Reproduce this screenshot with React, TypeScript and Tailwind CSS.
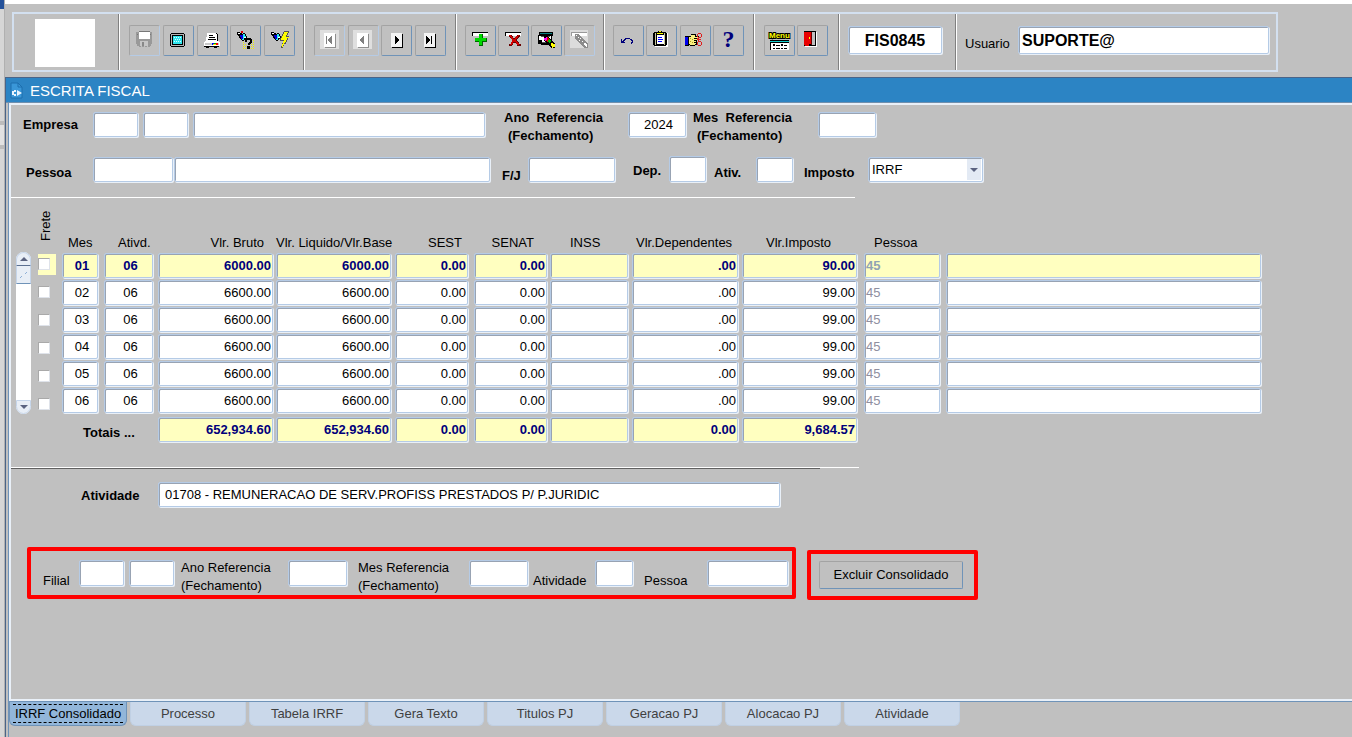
import React from 'react';
import clsx from 'clsx';

const box =
  'block rounded-xs border border-[#b5cbe6] outline-none shadow-[inset_1px_1px_0_#98a3b3,1px_1px_0_#e9f0f8]';
const field = `${box} bg-white px-[3px] text-black`;

const months = [
  { mes: '01', bruto: '6000.00', imposto: '90.00' },
  { mes: '02', bruto: '6600.00', imposto: '99.00' },
  { mes: '03', bruto: '6600.00', imposto: '99.00' },
  { mes: '04', bruto: '6600.00', imposto: '99.00' },
  { mes: '05', bruto: '6600.00', imposto: '99.00' },
  { mes: '06', bruto: '6600.00', imposto: '99.00' },
];

const columns = [
  { title: 'Mes', col: 'w-[42px]', head: 'pl-1.5', input: 'w-9 pl-1 text-center' },
  { title: 'Ativd.', col: 'w-[54px]', head: 'pl-3.5', input: 'w-[49px] pl-1 text-center' },
  { title: 'Vlr. Bruto', col: 'w-[118px]', head: 'pr-3 text-right', input: 'w-[115px] pr-px text-right' },
  { title: 'Vlr. Liquido/Vlr.Base', col: 'w-[119px]', head: '', input: 'w-[115px] pr-px text-right' },
  { title: 'SEST', col: 'w-[79px]', head: 'pr-3 text-right', input: 'w-[73px] pr-px text-right' },
  { title: 'SENAT', col: 'w-[76px]', head: 'pr-4 text-right', input: 'w-[73px] pr-px text-right' },
  { title: 'INSS', col: 'w-[82px]', head: 'pl-5', input: 'w-[78px] pr-px text-right' },
  { title: 'Vlr.Dependentes', col: 'w-[110px]', head: 'pl-1', input: 'w-[106px] pr-px text-right' },
  { title: 'Vlr.Imposto', col: 'w-[122px]', head: 'pl-6', input: 'w-[115px] pr-px text-right' },
  { title: 'Pessoa', col: 'w-[82px]', head: 'pl-2.5', input: 'w-[76px] pl-px' },
  { title: '', col: 'w-[317px]', head: '', input: 'w-[315px]' },
];

const totals = ['652,934.60', '652,934.60', '0.00', '0.00', '', '0.00', '9,684.57'];

const tabs = [
  'IRRF Consolidado',
  'Processo',
  'Tabela IRRF',
  'Gera Texto',
  'Titulos PJ',
  'Geracao PJ',
  'Alocacao PJ',
  'Atividade',
];

const Icon = ({ children }: { children: React.ReactNode }) => (
  <svg width="20" height="20" viewBox="0 0 20 20" className="shrink-0" shapeRendering="crispEdges" aria-hidden="true">
    {children}
  </svg>
);

const NavIcon = ({ d, disabled }: { d: string; disabled?: boolean }) => (
  <Icon>
    {disabled && <path d="M0 1h19v19H0z" fill="#dfdfdf" />}
    <path d="M5 5h11v14H5z" fill={disabled ? '#8f8f8f' : '#000'} />
    <path d="M4 4h11v14H4z" fill={disabled ? '#fff' : '#f4f4f4'} />
    <path d={d} fill={disabled ? '#808080' : '#000'} />
  </Icon>
);

const SaveIcon = () => (
  <Icon>
    <path d="M1 3h16v12h-1v2h-1v1h-2v-1h-1v1h-2v-1H9v1H7v-1H6v1H4v-1H2v-2H1z" fill="#999" />
    <path d="M4 2h11v8H4z" fill="#fff" />
    <path d="M4 2h11v1H4zM2 5h1v1H2zM15 5h1v1h-1z" fill="#777" />
    <path d="M5 12h8v5H5z" fill="#c6c6c6" />
    <path d="M7 13h2v4H7z" fill="#888" />
  </Icon>
);

const ScreenIcon = () => (
  <Icon>
    <path d="M3 4h13v1h1v12h-1v1H3v-1H2V5h1z" fill="#000" />
    <path d="M3 5h13v12H3z" fill="#b5b5b5" />
    <path d="M4 6h11v10H4z" fill="#000" />
    <path d="M5 7h9v8H5z" fill="#2fe6ee" />
    <path d="M6 8h1v1H6zM8 8h1v1H8zM10 8h1v1h-1zM12 8h1v1h-1zM7 10h1v1H7zM9 10h1v1H9zM11 10h1v1h-1zM6 12h1v1H6zM8 12h1v1H8zM10 12h1v1h-1zM12 12h1v1h-1z" fill="#d6ffff" />
  </Icon>
);

const PrintIcon = () => (
  <Icon>
    <path d="M6 4h9v1h1v7H6z" fill="#000" />
    <path d="M5 4h9v1h1v7H4V8h1z" fill="#fff" />
    <path d="M7 6h4v1H7zM7 8h6v1H7zM6 10h8v1H6z" fill="#000" />
    <path d="M3 12h14v1h1v4h-1v1h-2v1h-3v-1H7v1H4v-1H2v-5h1z" fill="#000" />
    <path d="M3 12h14v1h1v4H2v-4h1z" fill="#fff" />
    <path d="M3 14h14v2H3z" fill="#c8c8c8" />
    <path d="M10 14h2v2h-2z" fill="#00f" />
    <path d="M12 14h2v2h-2z" fill="#0a0" />
    <path d="M14 14h2v2h-2z" fill="#f00" />
    <path d="M11 15h3v1h-3z" fill="#ee0" />
  </Icon>
);

const Torch = () => (
  <>
    <path d="M1 3h3v1h2v1h1V4h2v1h1v2h1v2h-1v1H9v1H8v1H6v-1H5v-1H4V9H3V7H2V6H1z" fill="#000" />
    <path d="M4 6h3v4H5V8H4z" fill="#00d" />
    <path d="M7 5h2v2h1v2H8v2H6v-1h1z" fill="#2fe6ee" />
    <path d="M2 4h2v1H2zM8 8h2v1H8z" fill="#fff" />
  </>
);

const QueryEnterIcon = () => (
  <Icon>
    <path d="M5 2h2v2H5z" fill="#d00" />
    <Torch />
    <path
      d="M9 11h1v1H9zM7 13h1v1H7zM7 15h1v1H7zM7 17h1v1H7zM7 19h1v1H7zM9 19h1v1H9zM15 11h1v1h-1zM17 11h1v1h-1zM17 13h1v1h-1zM15 15h1v1h-1zM17 15h1v1h-1zM15 17h1v1h-1zM17 17h1v1h-1zM17 19h1v1h-1zM15 19h1v1h-1zM9 15h1v1H9zM9 17h1v1H9zM13 15h1v1h-1z"
      fill="#ee0"
    />
    <path d="M10 9h5v1h1v4h-1v1h-1v1h-2v-2h1v-1h1v-2h-3v2H9v-3h1zM11 17h3v3h-3z" fill="#000" />
  </Icon>
);

const QueryRunIcon = () => (
  <Icon>
    <Torch />
    <path d="M14 2h5v2h-1v2h-1v1h2v2h-1v2h-1v2h-1v2h-2v2h-1v2h-2v-2h1v-3h1v-2h-3V9h1V7h1V5h1V3h1z" fill="#555" />
    <path d="M14 3h4v1h-1v2h-1v2h3v1h-2v2h-1v2h-1v1h-1v2h-1v2h-1v-3h1v-3h1v-1h-3V9h1V7h1V5h1z" fill="#ff0" />
  </Icon>
);

const InsertIcon = () => (
  <Icon>
    <path d="M1 3h16v4H1z" fill="#000" />
    <path d="M2 4h15v3H2z" fill="#fff" />
    <path d="M8 5h4v4h4v4h-4v4H8v-4H4V9h4z" fill="#006400" />
    <path d="M8 5h3v4h4v3h-4v4H8v-4H4V9h4z" fill="#00d900" />
  </Icon>
);

const DeleteIcon = () => (
  <Icon>
    <path d="M1 3h16v4H1z" fill="#000" />
    <path d="M2 4h15v3H2z" fill="#fff" />
    <path d="M5 6h3v1h1v2h3V7h1V6h3v2h-1v1h-1v1h-1v2h1v1h1v2h2v2h-4v-2h-1v-1h-3v2H8v1H5v-2h2v-2h1v-3H7V9H6V8H5z" fill="#600" />
    <path d="M5 6h2v1h1v1h1v2h2V8h1V7h2V6h1v1h-1v2h-1v1h-1v2h1v1h1v1h1v2h-2v-1h-1v-2H9v2H8v1H6v-1h1v-2h1v-3H7V8H6V7H5z" fill="#d00000" />
  </Icon>
);

const ClearFormIcon = () => (
  <Icon>
    <path d="M2 3h14v4h-1v9H4v-1H1V6h1z" fill="#000" />
    <path d="M3 4h12v1H3z" fill="#0b8080" />
    <path d="M2 7h12v7H5v-3H2z" fill="#fff" />
    <path d="M4 7h9v1H4zM5 13h4v1H5z" fill="#555" />
    <path d="M7 7h4l7 8v4h-4L7 11z" fill="#000" />
    <path d="M7 9h2V8h1v3H9v1H8v-1H7z" fill="#f0f" />
    <path d="M10 8h1v1h1v2h-1v2h-1v-1H9v-1h1z" fill="#e00000" />
    <path d="M12 10h1v1h1v2h-1v1h-1v-1h-1v-2h1z" fill="#0b0" />
    <path d="M14 14h2v1h2v3h-2v1h-1v-2h-1z" fill="#ff0" />
  </Icon>
);

const BrushIcon = () => (
  <Icon>
    <path d="M0 1h18v18H0z" fill="#dcdcdc" />
    <path d="M1 3h16v4H1z" fill="#fff" />
    <path d="M1 3h16v1H1zM1 3h1v4H1z" fill="#999" />
    <path d="M5 5h4l9 10v4h-4L5 9z" fill="#8c8c8c" />
    <path d="M6 6h1v1H6zM8 8h1v1H8zM10 9h1v1h-1zM9 11h1v1H9zM12 12h1v1h-1zM14 14h2v1h1v3h-1v-1h-1v-1h-1z" fill="#fff" />
  </Icon>
);

const UndoIcon = () => (
  <Icon>
    <path d="M2 10h1v2h1v-1h1v-1h1V9h5v1h2v1h1v3h-1v1h-1v-2h1v-1h-1v-1h-1v-1H7v1H6v1H5v1h1v1H2z" fill="#00007b" />
  </Icon>
);

const ListIcon = () => (
  <Icon>
    <path d="M3 4h13v14H3z" fill="#fff" />
    <path d="M2 3h12v1h1v12h-1v1H2v-1H1V4h1z" fill="#000" />
    <path d="M3 4h10v12H3z" fill="#c7c79b" />
    <path d="M4 6h8v10H4z" fill="#000" />
    <path d="M5 6h7v9H5z" fill="#fff" />
    <path d="M6 2h4v1h2v3H4V3h2z" fill="#000" />
    <path d="M7 2h2v1H7zM5 4h6v1H5z" fill="#ff0" />
    <path d="M6 8h4v1H6zM6 10h5v1H6zM6 12h4v1H6z" fill="#00f" />
  </Icon>
);

const EditIcon = () => (
  <Icon>
    <path d="M0 7h4v10H0z" fill="#000" />
    <path d="M0 8h3v8H0z" fill="#00e" />
    <path d="M4 7h2V5h5v2h3v3h-2v6h-2v1H5v-1H4z" fill="#000" />
    <path d="M4 8h2V6h4v2h3v1H9v1h3v1H9v1h2v1H9v1h2v1h-1v1H5v-1H4z" fill="#f8f080" />
    <path d="M5 9h1v1H5zM7 10h1v1H7zM5 12h1v1H5zM7 13h1v1H7z" fill="#b09b20" />
    <path
      d="M13 4h3v1h1v3h-1v1h-2v1h2v1h-2v1h2v1h1v3h-1v1h-3v-1h-1v-3h1v-2h-1V9h1V8h-1V5h1zm0 1v3h3V5zm0 8v3h3v-3z"
      fill="#e02020"
      fillRule="evenodd"
    />
  </Icon>
);

const HelpIcon = () => (
  <span className="font-['Liberation_Serif',serif] text-2xl leading-5 font-bold text-[#00007b]">?</span>
);

const MenuIcon = () => (
  <svg width="20" height="22" viewBox="0 0 20 22" className="shrink-0 overflow-visible" aria-hidden="true">
    <text x="-1" y="9" fontFamily="Liberation Sans, sans-serif" fontWeight="bold" fontSize="8" fill="#ff0" stroke="#000" strokeWidth="2" paintOrder="stroke">Menu</text>
    <g shapeRendering="crispEdges">
      <path d="M0 11h19v10H0z" fill="#000" />
      <path d="M0 12h19v1H0z" fill="#1cc" />
      <path d="M1 14h18v7H1z" fill="#fff" />
      <path d="M3 15h2v2H3zM6 16h4v1H6zM11 15h2v2h-2zM14 16h3v1h-3zM3 19h2v1H3zM6 19h4v1H6zM11 19h2v1h-2zM14 19h3v1h-3z" fill="#000" />
    </g>
  </svg>
);

const ExitIcon = () => (
  <Icon>
    <path d="M2 3h12v15H2z" fill="#fff" />
    <path d="M1 2h12v15H1z" fill="#000" />
    <path d="M8 3h4v13H8z" fill="#c0c0c0" />
    <path d="M1 3h7v12H6v2H2v-1H1z" fill="#e80000" />
    <path d="M8 3h1v13H8z" fill="#600" />
    <path d="M6 8h1v2H6z" fill="#ff0" />
  </Icon>
);

const toolGroups = [
  {
    width: 'w-[185px]',
    pad: 'pl-[9px] pr-2',
    items: [
      { label: 'Salvar', icon: <SaveIcon />, disabled: true },
      { label: 'Tela', icon: <ScreenIcon /> },
      { label: 'Imprimir', icon: <PrintIcon /> },
      { label: 'Entrar consulta', icon: <QueryEnterIcon /> },
      { label: 'Executar consulta', icon: <QueryRunIcon /> },
    ],
  },
  {
    width: 'w-[152px]',
    pad: 'px-[9px]',
    items: [
      { label: 'Primeiro', icon: <NavIcon disabled d="M6 7h1v8H6zM11 7h1v8h-1v-1h-1v-1H9v-1H8v-2h1V9h1V8h1z" />, disabled: true },
      { label: 'Anterior', icon: <NavIcon disabled d="M10 7h1v8h-1v-1H9v-1H8v-1H7v-2h1V9h1V8h1z" />, disabled: true },
      { label: 'Proximo', icon: <NavIcon d="M8 7h1v1h1v1h1v1h1v2h-1v1h-1v1H9v1H8z" /> },
      { label: 'Ultimo', icon: <NavIcon d="M6 7h1v1h1v1h1v1h1v2H9v1H8v1H7v1H6zM11 7h1v8h-1z" /> },
    ],
  },
  {
    width: 'w-[148px]',
    pad: 'px-2',
    items: [
      { label: 'Inserir', icon: <InsertIcon /> },
      { label: 'Excluir', icon: <DeleteIcon /> },
      { label: 'Limpar tela', icon: <ClearFormIcon /> },
      { label: 'Limpar registro', icon: <BrushIcon />, disabled: true },
    ],
  },
  {
    width: 'w-[150px]',
    pad: 'pl-2 pr-[9px]',
    items: [
      { label: 'Desfazer', icon: <UndoIcon /> },
      { label: 'Lista de valores', icon: <ListIcon /> },
      { label: 'Editar', icon: <EditIcon /> },
      { label: 'Ajuda', icon: <HelpIcon /> },
    ],
  },
  {
    width: 'w-[85px]',
    pad: 'pl-[9px] pr-2.5',
    items: [
      { label: 'Menu', icon: <MenuIcon /> },
      { label: 'Sair', icon: <ExitIcon /> },
    ],
  },
];

const Field = ({ label, className, value }: { label: string; className: string; value?: string }) => (
  <input aria-label={label} defaultValue={value} className={clsx(field, className)} />
);

const Toolbar = () => (
  <header className="ml-[7px] mt-2 flex h-15 w-[1266px] border-2 border-[#d3e0f0]">
    <div className="w-[105px] border-r border-[#808080] pl-[21px] pt-[5px]">
      <div className="h-12 w-15 bg-white"></div>
    </div>
    {toolGroups.map((group, index) => (
      <div
        key={index}
        className={clsx('flex justify-between border-l border-r border-l-white border-r-[#808080] pt-[11px]', group.width, group.pad)}
      >
        {group.items.map((item) => (
          <button
            key={item.label}
            type="button"
            aria-label={item.label}
            disabled={item.disabled}
            className={clsx(
              'flex h-[31px] w-[31px] justify-center rounded-xs border border-t-[#a3a3a3] border-l-[#a3a3a3] pt-[3px]',
              item.disabled ? 'border-r-[#b5cbe6] border-b-[#b5cbe6]' : 'border-r-[#6f93b8] border-b-[#6f93b8]',
            )}
          >
            {item.icon}
          </button>
        ))}
      </div>
    ))}
    <div className="w-[117px] border-l border-r border-l-white border-r-[#808080] pl-2 pt-3">
      <Field label="Programa" value="FIS0845" className="h-7 w-[94px] pt-0.5 text-center text-base font-bold" />
    </div>
    <div className="flex flex-1 border-l border-white pl-2 pr-[7px] pt-3">
      <label htmlFor="usuario" className="w-[53px] pt-2.5">Usuario</label>
      <input id="usuario" defaultValue="SUPORTE@" className={clsx(field, 'h-7 flex-1 pt-0.5 text-base font-bold')} />
    </div>
  </header>
);

const Filters = () => (
  <section className="w-[975px] pl-3 font-bold">
    <div className="flex h-[52px] pt-1">
      <label htmlFor="empresa" className="w-[70px] pt-2">Empresa</label>
      <input id="empresa" className={clsx(field, 'mt-[3px] h-[25px] w-[45px]')} />
      <Field label="Filial da empresa" className="mt-[3px] ml-[5px] h-[25px] w-[45px]" />
      <Field label="Nome da empresa" className="mt-[3px] ml-[5px] h-[25px] w-[292px]" />
      <label htmlFor="ano" className="ml-[19px] w-[124px] leading-[18px]">
        Ano&nbsp; Referencia
        <span className="block pl-1">(Fechamento)</span>
      </label>
      <input id="ano" defaultValue="2024" className={clsx(box, 'mt-[3px] h-[25px] w-[58px] bg-white pl-[15px] font-normal')} />
      <label htmlFor="mes" className="ml-[7px] w-[125px] leading-[18px]">
        Mes&nbsp; Referencia
        <span className="block pl-1">(Fechamento)</span>
      </label>
      <input id="mes" className={clsx(field, 'mt-[3px] h-[25px] w-[58px]')} />
    </div>
    <div className="flex h-10">
      <label htmlFor="pessoa" className="w-[70px] pl-[3px] pt-2">Pessoa</label>
      <input id="pessoa" className={clsx(field, 'h-[25px] w-20')} />
      <Field label="Nome da pessoa" className="ml-px h-[25px] w-[316px]" />
      <label htmlFor="fj" className="ml-3 w-[26px] pt-[11px]">F/J</label>
      <input id="fj" className={clsx(field, 'h-[25px] w-[87px]')} />
      <label htmlFor="dep" className="ml-[18px] w-9 pt-1.5">Dep.</label>
      <input id="dep" className={clsx(field, '-mt-px h-[26px] w-[37px]')} />
      <label htmlFor="ativ" className="ml-2 w-[42px] pt-2">Ativ.</label>
      <input id="ativ" className={clsx(field, 'h-[25px] w-[37px]')} />
      <label htmlFor="imposto" className="ml-[11px] w-16 pt-2">Imposto</label>
      <div className="relative h-[25px] w-[115px]">
        <select id="imposto" className={clsx(field, 'h-full w-full appearance-none font-normal')}>
          <option>IRRF</option>
        </select>
        <span className="pointer-events-none absolute inset-y-0.5 right-0.5 flex w-3.5 items-center justify-center bg-[#e3eaf4]">
          <svg width="8" height="4" viewBox="0 0 8 4" aria-hidden="true">
            <path d="M0 0h8L4 4z" fill="#5b6380" />
          </svg>
        </span>
      </div>
    </div>
  </section>
);

const ScrollBar = () => (
  <div className="mt-[41px] flex h-[162px] w-[15px] flex-col rounded-lg bg-white" aria-hidden="true">
    <div className="flex h-3.5 items-center justify-center rounded-t-lg border border-[#c5d5ea] border-b-[#5b6f90] bg-[#e8eef6]">
      <svg width="8" height="4" viewBox="0 0 8 4">
        <path d="M0 4h8L4 0z" fill="#5b6380" />
      </svg>
    </div>
    <div className="flex h-[18px] items-center justify-center border-x border-b border-x-[#c5d5ea] border-b-[#6f93b8] bg-[#e8eef6]">
      <svg width="8" height="8" viewBox="0 0 8 8" stroke="#8fb0d6">
        <path d="M0 7l2-2M5 3l2-2" />
      </svg>
    </div>
    <div className="flex-1"></div>
    <div className="flex h-3.5 items-center justify-center rounded-b-lg border border-[#c5d5ea] bg-[#e8eef6]">
      <svg width="8" height="4" viewBox="0 0 8 4">
        <path d="M0 0h8L4 4z" fill="#5b6380" />
      </svg>
    </div>
  </div>
);

const cellColor = (row: number, column: number) => {
  const bg = row === 0 ? 'bg-[#ffffc0]' : 'bg-white';
  if (column === 9) return clsx(bg, row === 0 ? 'font-bold text-[#8fa3b3]' : 'text-[#8f8f9f]');
  return clsx(bg, row === 0 ? 'font-bold text-[#00007b]' : 'text-black');
};

const MonthsGrid = () => (
  <section className="flex pl-[5px] pt-[13px]">
    <ScrollBar />
    <div className="ml-[7px] w-6">
      <div className="flex h-[39px] items-start">
        <span className="h-[30px] w-4 rotate-180 leading-4 [writing-mode:vertical-rl]">Frete</span>
      </div>
      {months.map((row, index) => (
        <div key={row.mes} className="flex h-7 items-center">
          <div className={clsx('flex h-[21px] w-[18px] items-center', index === 0 && 'bg-[#ffffc0]')}>
            <input
              type="checkbox"
              aria-label={`Frete ${row.mes}`}
              className="h-3 w-3 appearance-none border border-t-[#a9a9a9] border-r-[#dfe3ea] border-b-[#dfe3ea] border-l-[#a9a9a9] bg-white"
            />
          </div>
        </div>
      ))}
    </div>
    <table className="w-[1201px] table-fixed border-collapse">
      <colgroup>
        {columns.map((column, index) => (
          <col key={index} className={column.col} />
        ))}
      </colgroup>
      <thead>
        <tr className="h-[42px] align-bottom">
          {columns.map((column, index) => (
            <th key={index} scope="col" className={clsx('whitespace-nowrap p-0 text-left font-normal leading-[21px]', column.head)}>
              {column.title}
            </th>
          ))}
        </tr>
      </thead>
      <tbody>
        {months.map((row, rowIndex) => {
          const values = [row.mes, '06', row.bruto, row.bruto, '0.00', '0.00', '', '.00', row.imposto, '45', ''];
          return (
            <tr key={row.mes} className="h-[27px] align-top">
              {values.map((value, index) => (
                <td key={index} className="p-0">
                  <input
                    aria-label={`${columns[index].title || 'Nome'} ${row.mes}`}
                    defaultValue={value}
                    className={clsx(box, 'h-[25px]', columns[index].input, cellColor(rowIndex, index))}
                  />
                </td>
              ))}
            </tr>
          );
        })}
      </tbody>
      <tfoot>
        <tr className="align-top">
          <th colSpan={2} scope="row" className="p-0 pl-[21px] pt-2.5 text-left">Totais ...</th>
          {totals.map((total, index) => (
            <td key={index} className="p-0 pt-0.5">
              <input
                aria-label={`Total ${columns[index + 2].title}`}
                defaultValue={total}
                className={clsx(box, 'h-[25px] bg-[#ffffc0] font-bold text-[#00007b]', columns[index + 2].input)}
              />
            </td>
          ))}
          <td colSpan={2}></td>
        </tr>
      </tfoot>
    </table>
  </section>
);

const Consolidado = () => (
  <section className="flex items-start pl-4">
    <div className="flex h-[52px] w-[769px] rounded-xs border-4 border-[#f00] pl-3 pt-[9px]">
      <label htmlFor="filial" className="w-9 pt-[13px]">Filial</label>
      <input id="filial" className={clsx(field, 'h-[26px] w-[45px]')} />
      <Field label="Nome da filial" className="ml-[5px] h-[26px] w-[45px]" />
      <label htmlFor="ano2" className="-mt-px ml-[7px] w-[107px] leading-[18px]">
        Ano Referencia
        <span className="block">(Fechamento)</span>
      </label>
      <input id="ano2" className={clsx(field, 'h-[26px] w-[59px]')} />
      <label htmlFor="mes2" className="-mt-px ml-[11px] w-[111px] leading-[18px]">
        Mes Referencia
        <span className="block">(Fechamento)</span>
      </label>
      <input id="mes2" className={clsx(field, 'h-[26px] w-[59px]')} />
      <label htmlFor="atividade2" className="ml-[5px] w-[62px] pt-[13px]">Atividade</label>
      <input id="atividade2" className={clsx(field, 'h-[26px] w-[38px]')} />
      <label htmlFor="pessoa2" className="ml-[11px] w-[63px] pt-[13px]">Pessoa</label>
      <input id="pessoa2" className={clsx(field, 'h-[26px] w-[81px]')} />
    </div>
    <div className="ml-[11px] mt-[3px] h-[50px] w-[171px] rounded-xs border-4 border-[#f00] pl-2 pt-[7px]">
      <button
        type="button"
        className="h-7 w-36 rounded-xs border border-t-[#a3a3a3] border-r-[#6f93b8] border-b-[#6f93b8] border-l-[#a3a3a3]"
      >
        Excluir Consolidado
      </button>
    </div>
  </section>
);

const App = () => {
  return (
    <div className="flex min-h-screen overflow-hidden bg-[#c0c0c0] font-['Liberation_Sans',Arial,sans-serif] text-[13px] leading-4 text-black">
      <div className="w-[5px] shrink-0 border-r border-[#b0b0b0] bg-[#d6d6d6]">
        <div className="h-[9px] bg-[#24519a]"></div>
        <div className="mt-28 h-7 border-y-4 border-[#bcbcbc] bg-[#e2e2e2]"></div>
      </div>
      <div className="flex min-w-0 flex-1 flex-col">
        <div className="h-1 bg-white"></div>
        <Toolbar />
        <main className="mt-[5px] flex flex-1 flex-col border-l border-t border-[#4a6488]">
          <h1 className="flex h-[25px] shrink-0 items-center border-b border-[#6f8fae] bg-[#2c84c4] pl-1 pt-px text-[15px] text-white">
            <svg width="13" height="17" viewBox="0 0 13 17" className="mr-[7px]" aria-hidden="true">
              <path d="M1 1h7l4 4v11H1z" fill="#3a97d8" stroke="#1d6fae" />
              <path d="M8 1v4h4" fill="none" stroke="#1d6fae" />
              <path d="M2 9h2v4H2zM4 8h2v2H4zM4 12h2v2H4zM7 8l5 3-5 3z" fill="#e8f4ff" />
            </svg>
            ESCRITA FISCAL
          </h1>
          <div className="ml-0.5 flex flex-1 flex-col border-l border-[#6f93b8]">
            <div className="flex-1 border-y-2 border-l-2 border-[#e9f0f8]">
              <Filters />
              <hr className="w-[844px] border-white" />
              <MonthsGrid />
              <hr className="mt-[25px] w-[848px] border-white" />
              <hr className="w-[809px] border-[#606060]" />
              <div className="flex pl-[70px] pt-[13px]">
                <label htmlFor="atividade" className="w-[77px] pt-1.5 font-bold">Atividade</label>
                <input
                  id="atividade"
                  defaultValue="01708 - REMUNERACAO DE SERV.PROFISS PRESTADOS P/ P.JURIDIC"
                  className={clsx(box, 'h-[25px] w-[622px] bg-white px-1.5')}
                />
              </div>
              <div className="mt-10">
                <Consolidado />
              </div>
            </div>
            <nav className="flex gap-[3px] border-t border-[#6f93b8] pb-[11px]">
              {tabs.map((tab, index) => (
                <button
                  key={tab}
                  type="button"
                  className={clsx(
                    'flex h-6 items-center justify-center rounded-b-md border border-t-0',
                    index === 0 ? 'w-[118px] border-[#6f93b8] bg-[#92b6da]' : 'w-29 border-[#c0d0e4] bg-[#cad8ea] text-[#404040]',
                  )}
                >
                  <span className={clsx(index === 0 && 'border-y border-dashed border-black px-0.5 leading-[17px]')}>{tab}</span>
                </button>
              ))}
            </nav>
          </div>
        </main>
      </div>
    </div>
  );
};

export default App;
